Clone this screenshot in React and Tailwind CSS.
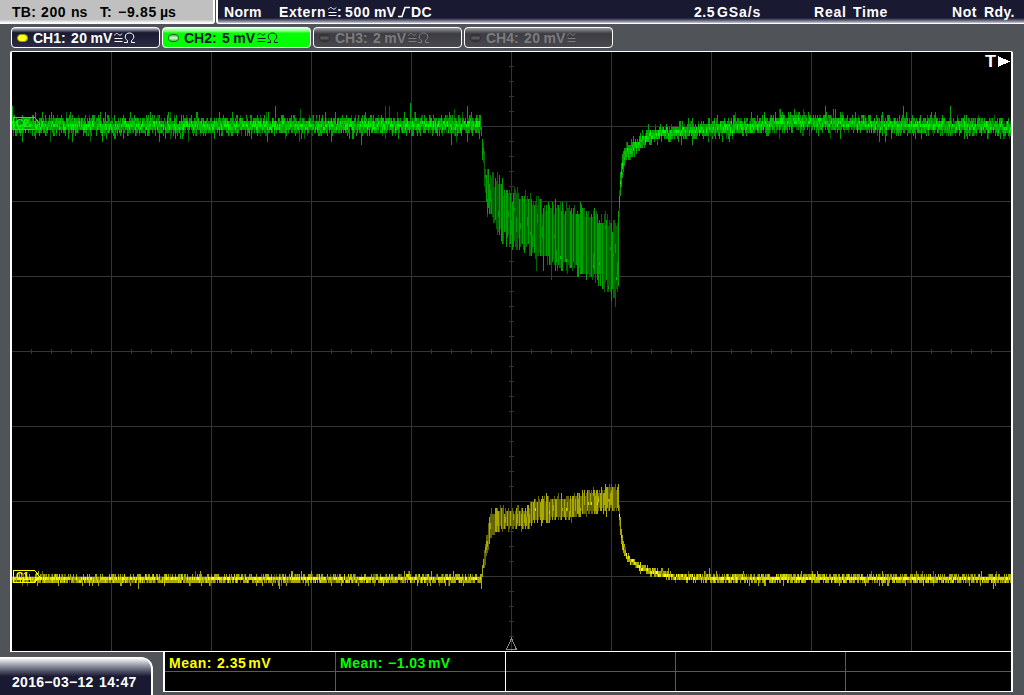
const GREEN = ['#006400', '#00a000', '#00c800', '#00f400'];
const YELLOW = ['#646400', '#a8a800', '#dcdc00', '#ffff00'];

// envelopes are [x, top, bottom]
const CH2_BURST = [
    [480, 120, 128], [481, 130, 142], [483, 148, 168], [485, 164, 192], [487, 178, 210], [492, 179, 220],
    [500, 190, 234], [508, 194, 240], [515, 197, 243], [530, 200, 247], [540, 207, 257], [555, 209, 264],
    [570, 212, 267], [585, 214, 272], [600, 219, 279], [608, 221, 287], [613, 228, 291], [617, 222, 286],
    [618, 212, 284],
];
const CH2_REST = [
    [12, 126], [479, 125], [619, 203], [620, 184], [621, 174], [622, 166], [624, 158], [626, 153], [630, 149], [640, 142],
    [650, 136], [660, 133], [680, 131], [700, 130], [730, 127], [760, 125], [790, 122], [830, 123], [880, 125], [1011, 127],
];
const CH1_BURST = [
    [481, 574, 580], [484, 555, 567], [486, 538, 557], [489, 521, 543], [492, 512, 535], [500, 510, 527],
    [515, 511, 528], [525, 508, 526], [533, 501, 522], [550, 498, 519], [570, 498, 518], [580, 494, 514],
    [600, 490, 511], [612, 486, 509], [618, 487, 509],
];
const CH1_REST = [
    [12, 579], [480, 579], [619, 516], [620, 526], [621, 536], [622, 543], [624, 550], [627, 557], [632, 562], [640, 567],
    [650, 571], [660, 574], [675, 577], [720, 578], [1011, 579],
];

function createRandom(seed) {
    let s = seed;
    return () => {
        s = (s * 1664525 + 1013904223) % 4294967296;
        return s / 4294967296;
    };
}

function sample(points, x, key) {
    for (let i = 1; i < points.length; i++) {
        if (x <= points[i][0]) {
            const a = points[i - 1];
            const b = points[i];
            return a[key] + ((x - a[0]) / (b[0] - a[0])) * (b[key] - a[key]);
        }
    }
    return points[points.length - 1][key];
}

// the scope samples vertically in steps of three pixels
const snap = (y) => Math.round((y - 1) / 3) * 3 + 1;

function buildTrace(burst, rest, noise, seed) {
    const rand = createRandom(seed);
    const layers = ['', '', '', ''];
    const put = (level, x, y, h) => {
        layers[level] += `M${x} ${y}h1v${h}h-1z`;
    };
    const start = burst[0][0];
    const end = burst[burst.length - 1][0];
    for (let x = 12; x < 1011; x++) {
        if (x >= start && x <= end) {
            const spread = noise * 2;
            const edge = x > start + 6 ? 1 : 0;
            const top = snap(sample(burst, x, 1) + (rand() - 0.6) * spread - (rand() > 0.93 ? noise * edge : 0));
            const bottom = Math.max(top + 6, snap(sample(burst, x, 2) + (rand() - 0.4) * spread + (rand() > 0.93 ? noise * 1.5 * edge : 0)));
            const level = (x % 3 === 0) !== rand() > 0.82 ? 1 : 0;
            put(level, x, top, bottom - top);
            if (rand() > 0.6) {
                const h = 3 * Math.ceil(rand() * 5);
                put(1, x, snap(top + rand() * (bottom - top - h)), h);
            }
            if (rand() > 0.95) put(2, x, snap(bottom - 12), 3);
            continue;
        }
        const base = sample(rest, x, 1);
        const steep = x > end && x < end + 8;
        const calm = x > end && x < end + 90 ? 0.85 : 1;
        const mid = base + (steep ? 0 : (rand() - 0.5) * noise * 0.7);
        const reach = () => {
            const r = rand();
            const tail = r > 0.97 ? 2.3 : r > 0.84 ? 1.6 : r > 0.35 ? 1.15 : 0.8;
            return noise * calm * tail * (0.75 + rand() * 0.45);
        };
        const up = steep ? noise + (end + 8 - x) : reach();
        const down = steep ? noise + (end + 8 - x) : reach();
        const top = snap(mid - up);
        const bottom = Math.max(top + 6, snap(mid + down));
        const edge = rand() > 0.22 ? 1 : 0;
        for (let y = top; y < bottom; y += 3) {
            const d = Math.abs(y + 1.5 - mid);
            const r = rand();
            let level = edge;
            if (d < noise * 0.4) level = r > 0.7 ? 3 : r > 0.2 ? 2 : 1;
            else if (d < noise * 0.9) level = r > 0.82 ? 2 : r > 0.15 ? 1 : 0;
            put(level, x, y, 3);
        }
    }
    return layers;
}

const CH2_TRACE = buildTrace(CH2_BURST, CH2_REST, 7, 41);
const CH1_TRACE = buildTrace(CH1_BURST, CH1_REST, 3.3, 97);

function Trace({ layers, colors }) {
    return layers.map((d, i) => <path key={colors[i]} d={d} fill={colors[i]} />);
}

function Grid() {
    let lines = '';
    for (let x = 111; x < 1011; x += 100) lines += `M${x} 52h1v599h-1z`;
    for (let y = 126; y < 651; y += 75) lines += `M12 ${y}h999v1h-999z`;
    for (let x = 31; x < 1011; x += 20) lines += `M${x} 349h1v5h-1z`;
    for (let y = 66; y < 651; y += 15) lines += `M509 ${y}h5v1h-5z`;
    return <path d={lines} fill="#343434" />;
}

function Screen() {
    return (
        <svg viewBox="12 52 999 599" className="block h-[599px] w-[999px]" shapeRendering="crispEdges">
            <Grid />
            <Trace layers={CH2_TRACE} colors={GREEN} />
            <Trace layers={CH1_TRACE} colors={YELLOW} />
            <g fill="none" stroke="#20e820">
                <path d="M13.5 117.5h21l5 6-5 6h-21z" />
                <text x="16" y="127" fill="#20e820" stroke="none" className="font-['Liberation_Sans'] text-[10px]">C2</text>
            </g>
            <g fill="none" stroke="#ffff00">
                <path d="M13.5 570.5h21l5 6-5 6h-21z" />
                <text x="16" y="580" fill="#ffff00" stroke="none" className="font-['Liberation_Sans'] text-[10px]">C1</text>
            </g>
            <path d="M511.5 638.5l-5 11h10z" fill="none" stroke="#8c8c8c" />
            <path d="M998 56v11l12-5.5z" fill="#fff" />
            <text x="985" y="67" fill="#fff" textLength="11" lengthAdjust="spacingAndGlyphs" className="font-['Liberation_Sans'] text-[16px] font-bold">T</text>
        </svg>
    );
}

function Coupling({ ohm }) {
    return (
        <svg viewBox="0 0 22 14" className="h-[14px] w-[22px] shrink-0" fill="none" stroke="currentColor">
            <path d="M.5 4.500c1.500-3 3-2 4-1s2.500 1 3.500-1M.5 7.500h8M.5 10.500h8" />
            {ohm && <path d="M10 11.500h3.500v-2c-3.500-2-3-7.500 2-7.500s5.500 5.500 2 7.500v2H21" />}
        </svg>
    );
}

function Channel({ name, value, color, dot, ohm = true }) {
    return (
        <div className={`flex h-[21px] w-[149px] items-center rounded-[4px] border border-white pl-[5px] ${color}`}>
            <span className={`mr-[5px] h-[8px] w-[11px] shrink-0 rounded-full border ${dot}`} />
            <span className="w-[38px] shrink-0">{name}</span>
            <span className="mr-[3px] tracking-[0.5px]">{value}</span>
            <span className="mr-[2px]">mV</span>
            <Coupling ohm={ohm} />
        </div>
    );
}

function Header() {
    return (
        <div className="flex h-6 justify-between">
            <div className="flex w-[215px] shrink-0 items-center rounded-br-[3px] border-r-2 border-b border-white bg-linear-to-b from-[#c0c0c0] from-85% to-white pl-3 text-black">
                <span className="w-[29px] tracking-[0.3px]">TB:</span>
                <span className="w-[30px] tracking-[0.6px]">200</span>
                <span className="w-[29px]">ns</span>
                <span className="w-[18px]">T:</span>
                <span className="w-[42px] tracking-[0.7px]">−9.85</span>
                <span>µs</span>
            </div>
            <div className="flex w-[808px] shrink-0 items-center rounded-bl-[3px] border-b border-l-2 border-white bg-linear-to-b from-[#191932] from-78% to-[#c8c8d4] pl-[6px] text-white">
                <span className="w-[55px] tracking-[0.3px]">Norm</span>
                <span className="w-[49px] tracking-[0.6px]">Extern</span>
                <span className="w-[9px] overflow-hidden"><Coupling /></span>
                <span className="w-[8px]">:</span>
                <span className="w-[29px] tracking-[0.7px]">500</span>
                <span className="w-[24px]">mV</span>
                <svg viewBox="0 0 12 12" className="mr-px h-3 w-3" fill="none" stroke="currentColor" strokeWidth="1.6">
                    <path d="M0 10.500h4L7 1.500h5" />
                </svg>
                <span className="w-[283px] tracking-[0.4px]">DC</span>
                <span className="w-[23px] tracking-[0.5px]">2.5</span>
                <span className="w-[97px] tracking-[0.9px]">GSa/s</span>
                <span className="w-[39px] tracking-[0.8px]">Real</span>
                <span className="w-[99px] tracking-[0.6px]">Time</span>
                <span className="w-[32px] tracking-[0.6px]">Not</span>
                <span className="tracking-[0.4px]">Rdy.</span>
            </div>
        </div>
    );
}

function Measurement({ label, value, className = '' }) {
    return (
        <div className={`flex h-[39px] flex-col ${className}`}>
            <div className="flex h-5 shrink-0 items-center gap-[5px] border-b border-[#5a5a5a] pt-[3px] pl-1">
                <span className="tracking-[0.5px]">{label}</span>
                {value && (
                    <span className="flex gap-[2px]">
                        <span className="tracking-[0.5px]">{value}</span>
                        <span className="tracking-[0.5px]">mV</span>
                    </span>
                )}
            </div>
        </div>
    );
}

export default function App() {
    return (
        <div className="flex h-[695px] w-[1024px] flex-col overflow-hidden bg-[#505458] font-['Liberation_Sans',sans-serif] text-[14px] leading-none font-bold whitespace-pre">
            <Header />
            <div className="flex h-[27px] gap-[2px] pt-[3px] pl-[11px]">
                <Channel
                    name="CH1:"
                    value="20"
                    color="bg-linear-to-b from-[#c8c8d4] via-[#191932] via-25% to-[#2c2c44] text-white"
                    dot="border-[#a0a000] bg-[#ffff20]"
                />
                <Channel
                    name="CH2:"
                    value="5"
                    color="bg-linear-to-b from-[#d8ffd8] via-[#00ff00] via-25% to-[#00ff00] text-[#191932]"
                    dot="border-[#286028] bg-linear-to-b from-[#40c040] via-[#d0ffd0] to-[#40c040]"
                />
                <Channel
                    name="CH3:"
                    value="2"
                    color="bg-linear-to-b from-[#99999d] via-[#3c3c42] via-30% to-[#48484e] text-[#7c7c7c]"
                    dot="border-[#303030] bg-linear-to-b from-[#303030] via-[#606060] to-[#303030]"
                />
                <Channel
                    name="CH4:"
                    value="20"
                    ohm={false}
                    color="bg-linear-to-b from-[#99999d] via-[#3c3c42] via-30% to-[#48484e] text-[#7c7c7c]"
                    dot="border-[#303030] bg-linear-to-b from-[#303030] via-[#606060] to-[#303030]"
                />
            </div>
            <div className="ml-[10px] h-[601px] w-[1003px] shrink-0 rounded-t-[2px] border-x-2 border-y border-white bg-black">
                <Screen />
            </div>
            <div className="flex h-[43px]">
                <div className="mt-[5px] flex h-[38px] w-[153px] items-center rounded-tr-[12px] border-t border-r-2 border-white bg-linear-to-b from-white via-[#191932] via-50% to-[#191932] pt-[11px] pl-3 text-white">
                    <span className="w-[87px] tracking-[0.3px]">2016−03−12</span>
                    <span className="tracking-[0.4px]">14:47</span>
                </div>
                <div className="ml-[10px] flex h-10 w-[850px] border-x-2 border-b border-white bg-black">
                    <Measurement label="Mean:" value="2.35" className="w-[171px] border-r border-[#5a5a5a] text-[#ffff00]" />
                    <Measurement label="Mean:" value="−1.03" className="w-[170px] border-r border-r-white text-[#00ff00]" />
                    <Measurement className="w-[170px] border-r border-[#5a5a5a]" />
                    <Measurement className="w-[170px] border-r border-[#5a5a5a]" />
                    <Measurement className="flex-1" />
                </div>
            </div>
        </div>
    );
}
